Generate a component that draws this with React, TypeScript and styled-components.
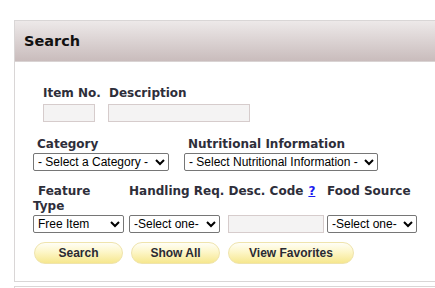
import styled, { createGlobalStyle } from "styled-components";

const GlobalStyle = createGlobalStyle`
  html, body {
    margin: 0;
    padding: 0;
    background: #fff;
    overflow: hidden;
  }
`;

const Page = styled.div`
  padding: 20px 0 0 14px;
  font-family: "DejaVu Sans", Verdana, sans-serif;
`;

const Panel = styled.div`
  width: 440px;
  border: 1px solid #d9d6d6;
  border-right: none;
`;

const PanelHeader = styled.div`
  height: 40px;
  display: flex;
  align-items: center;
  padding-left: 9px;
  background: linear-gradient(#ede9e9, #c9bcbc);
  border-bottom: 1px solid #d9d3d3;
  font-size: 14.5px;
  font-weight: bold;
  color: #111;
`;

const PanelBody = styled.form`
  display: flex;
  flex-direction: column;
  padding: 24px 0 17px 18px;
`;

const Row = styled.div<{ $cols: string; $gap?: number; $indent?: number }>`
  display: grid;
  grid-template-columns: ${(p) => p.$cols};
  align-items: start;
  margin-left: ${(p) => p.$indent ?? 0}px;
  margin-top: ${(p) => p.$gap ?? 0}px;
`;

const Label = styled.div<{ $indent?: number; $span?: number }>`
  font-size: 12px;
  font-weight: bold;
  color: #2e2e3a;
  line-height: 15px;
  text-indent: ${(p) => p.$indent ?? 0}px;
  grid-column: span ${(p) => p.$span ?? 1};
  white-space: nowrap;
`;

const WrapLabel = styled(Label)`
  white-space: normal;
  width: 80px;
`;

const HelpLink = styled.a`
  color: #1a1aee;
  text-decoration: underline;
  margin-left: 5px;
`;

const TextBox = styled.input<{ $w: number }>`
  box-sizing: border-box;
  width: ${(p) => p.$w}px;
  height: 18px;
  margin: 0;
  border: 1px solid #d6cccc;
  background: #f4f3f3;
  padding: 0 3px;
  outline: none;
`;

const Select = styled.select<{ $w: number }>`
  box-sizing: border-box;
  width: ${(p) => p.$w}px;
  height: 18px;
  margin: 0;
  padding: 0;
  font-family: "Liberation Sans", Arial, sans-serif;
  font-size: 12px;
  color: #000;
  border: 1px solid #767676;
  border-radius: 2px;
  background: #fff;
`;

const Buttons = styled.div`
  display: flex;
  gap: 8px;
  margin-top: 9px;
  margin-left: 1px;
`;

const PillButton = styled.button<{ $w: number }>`
  box-sizing: border-box;
  width: ${(p) => p.$w}px;
  height: 22px;
  border: 1px solid #efe4ad;
  border-radius: 11px;
  background: linear-gradient(#fffef6 0%, #fdf6c8 45%, #f6e78e 100%);
  font-family: "Liberation Sans", Arial, sans-serif;
  font-size: 12px;
  font-weight: bold;
  color: #2a2a33;
  padding: 0;
  cursor: pointer;
`;

const NextPanel = styled.div`
  width: 440px;
  height: 10px;
  margin-top: 4px;
  border-top: 1px solid #d9d6d6;
  border-left: 1px solid #d9d6d6;
`;

export default function App() {
  return (
    <Page>
      <GlobalStyle />
      <Panel>
        <PanelHeader>Search</PanelHeader>
        <PanelBody>
          <Row $cols="66px auto" $indent={10}>
            <Label>Item No.</Label>
            <Label>Description</Label>
          </Row>
          <Row $cols="65px auto" $indent={10} $gap={3}>
            <TextBox $w={52} />
            <TextBox $w={142} />
          </Row>

          <Row $cols="151px auto" $gap={15}>
            <Label $indent={4}>Category</Label>
            <Label $indent={4}>Nutritional Information</Label>
          </Row>
          <Row $cols="151px auto" $gap={1}>
            <Select $w={136}>
              <option>- Select a Category -</option>
            </Select>
            <Select $w={194}>
              <option>- Select Nutritional Information -</option>
            </Select>
          </Row>

          <Row $cols="96px 99px 99px auto" $gap={13}>
            <WrapLabel $indent={5}>Feature Type</WrapLabel>
            <Label $span={2}>
              Handling Req. Desc. Code<HelpLink href="#">?</HelpLink>
            </Label>
            <Label>Food Source</Label>
          </Row>
          <Row $cols="96px 99px 99px auto" $gap={1}>
            <Select $w={91}>
              <option>Free Item</option>
            </Select>
            <Select $w={91}>
              <option>-Select one-</option>
            </Select>
            <TextBox $w={96} />
            <Select $w={90}>
              <option>-Select one-</option>
            </Select>
          </Row>

          <Buttons>
            <PillButton $w={89} type="button">Search</PillButton>
            <PillButton $w={89} type="button">Show All</PillButton>
            <PillButton $w={126} type="button">View Favorites</PillButton>
          </Buttons>
        </PanelBody>
      </Panel>
      <NextPanel />
    </Page>
  );
}
